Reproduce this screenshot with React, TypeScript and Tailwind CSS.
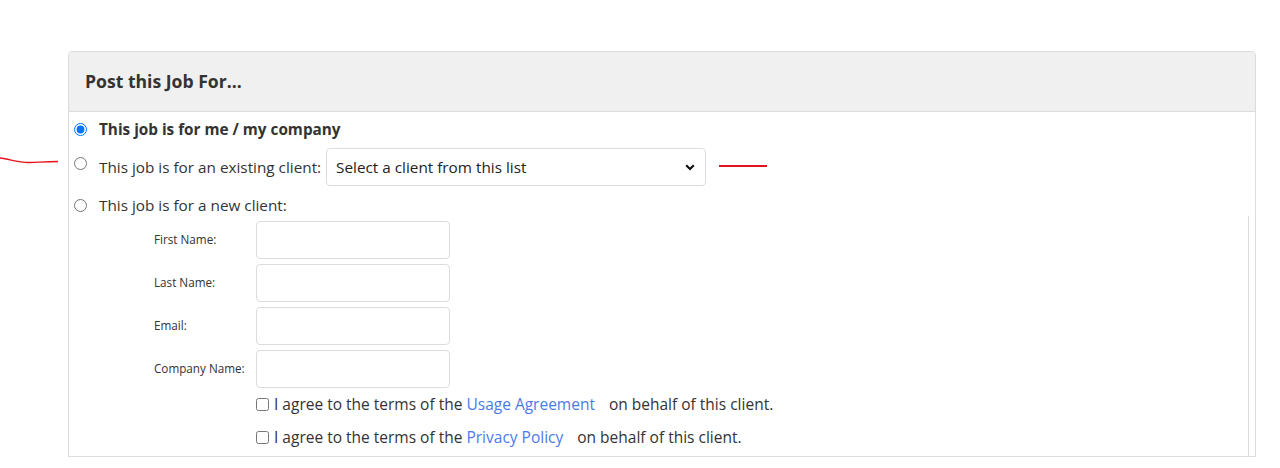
import React from "react";

const font = { fontFamily: '"Open Sans", "Noto Sans", sans-serif' };

const fields = ["First Name:", "Last Name:", "Email:", "Company Name:"];

function Agree({ link }: { link: string }) {
  return (
    <label className="flex h-[33px] items-center text-[15.5px] text-[#333]">
      <input type="checkbox" className="m-0 h-[13px] w-[13px]" />
      <span className="ml-[5px]">
        I agree to the terms of the <a className="text-[#4c7be8]">{link}</a>
        <span className="ml-[14px]">on behalf of this client.</span>
      </span>
    </label>
  );
}

export default function App() {
  return (
    <div className="relative h-[468px] overflow-hidden bg-white pt-[51px] pl-[68px]" style={font}>
      {/* red annotation marks */}
      <svg className="absolute left-0 top-[154px]" width="62" height="14">
        <path d="M0 4 C 10 5, 18 9, 30 8.5 S 50 7.5, 58 7.5" stroke="#e4121b" strokeWidth="1.4" fill="none" />
      </svg>
      <div className="absolute left-[719px] top-[165px] h-[2px] w-[48px] bg-[#e4121b]" />

      <div className="w-[1188px] rounded-t-[4px] border border-[#dcdcdc] text-[#333]">
        <div className="flex h-[60px] items-center rounded-t-[4px] border-b border-[#dcdcdc] bg-[#f0f0f0] px-[16px] text-[17.6px] font-bold text-[#333]">
          Post this Job For...
        </div>
        <div className="pl-[5px]">
          <label className="flex h-[34px] items-center text-[15.3px] font-bold">
            <input type="radio" name="for" defaultChecked className="m-0 h-[13px] w-[13px]" />
            <span className="ml-[12px]">This job is for me / my company</span>
          </label>
          <label className="mt-[2px] flex h-[38px] items-center text-[15.3px]">
            <input type="radio" name="for" className="m-0 -mt-[8px] h-[13px] w-[13px]" />
            <span className="ml-[12px]">This job is for an existing client:</span>
            <div className="ml-[5px] flex h-[38px] w-[380px] items-center justify-between rounded-[4px] border border-[#dcdcdc] pl-[9px] pr-[10px] text-[#222]">
              <span>Select a client from this list</span>
              <svg width="10" height="7" viewBox="0 0 10 7">
                <path d="M1.2 1.2 L5 5 L8.8 1.2" stroke="#111" strokeWidth="2.2" fill="none" />
              </svg>
            </div>
          </label>
          <label className="flex h-[32px] items-center pt-[6px] text-[15.3px]">
            <input type="radio" name="for" className="m-0 h-[13px] w-[13px]" />
            <span className="ml-[12px]">This job is for a new client:</span>
          </label>
        </div>

        <div className="mr-[6px] ml-[72px] -mt-[2px] border-r border-[#dcdcdc] pt-[5px] pb-[2px]">
          <div className="flex flex-col gap-[5px] pl-[13px]">
            {fields.map((f) => (
              <div key={f} className="flex h-[38px] items-center">
                <span className="w-[102px] text-[11.7px] text-[#333]">{f}</span>
                <div className="h-[38px] w-[194px] rounded-[4px] border border-[#dcdcdc]" />
              </div>
            ))}
          </div>
          <div className="pl-[115px]">
            <Agree link="Usage Agreement" />
            <Agree link="Privacy Policy" />
          </div>
        </div>
      </div>
    </div>
  );
}
